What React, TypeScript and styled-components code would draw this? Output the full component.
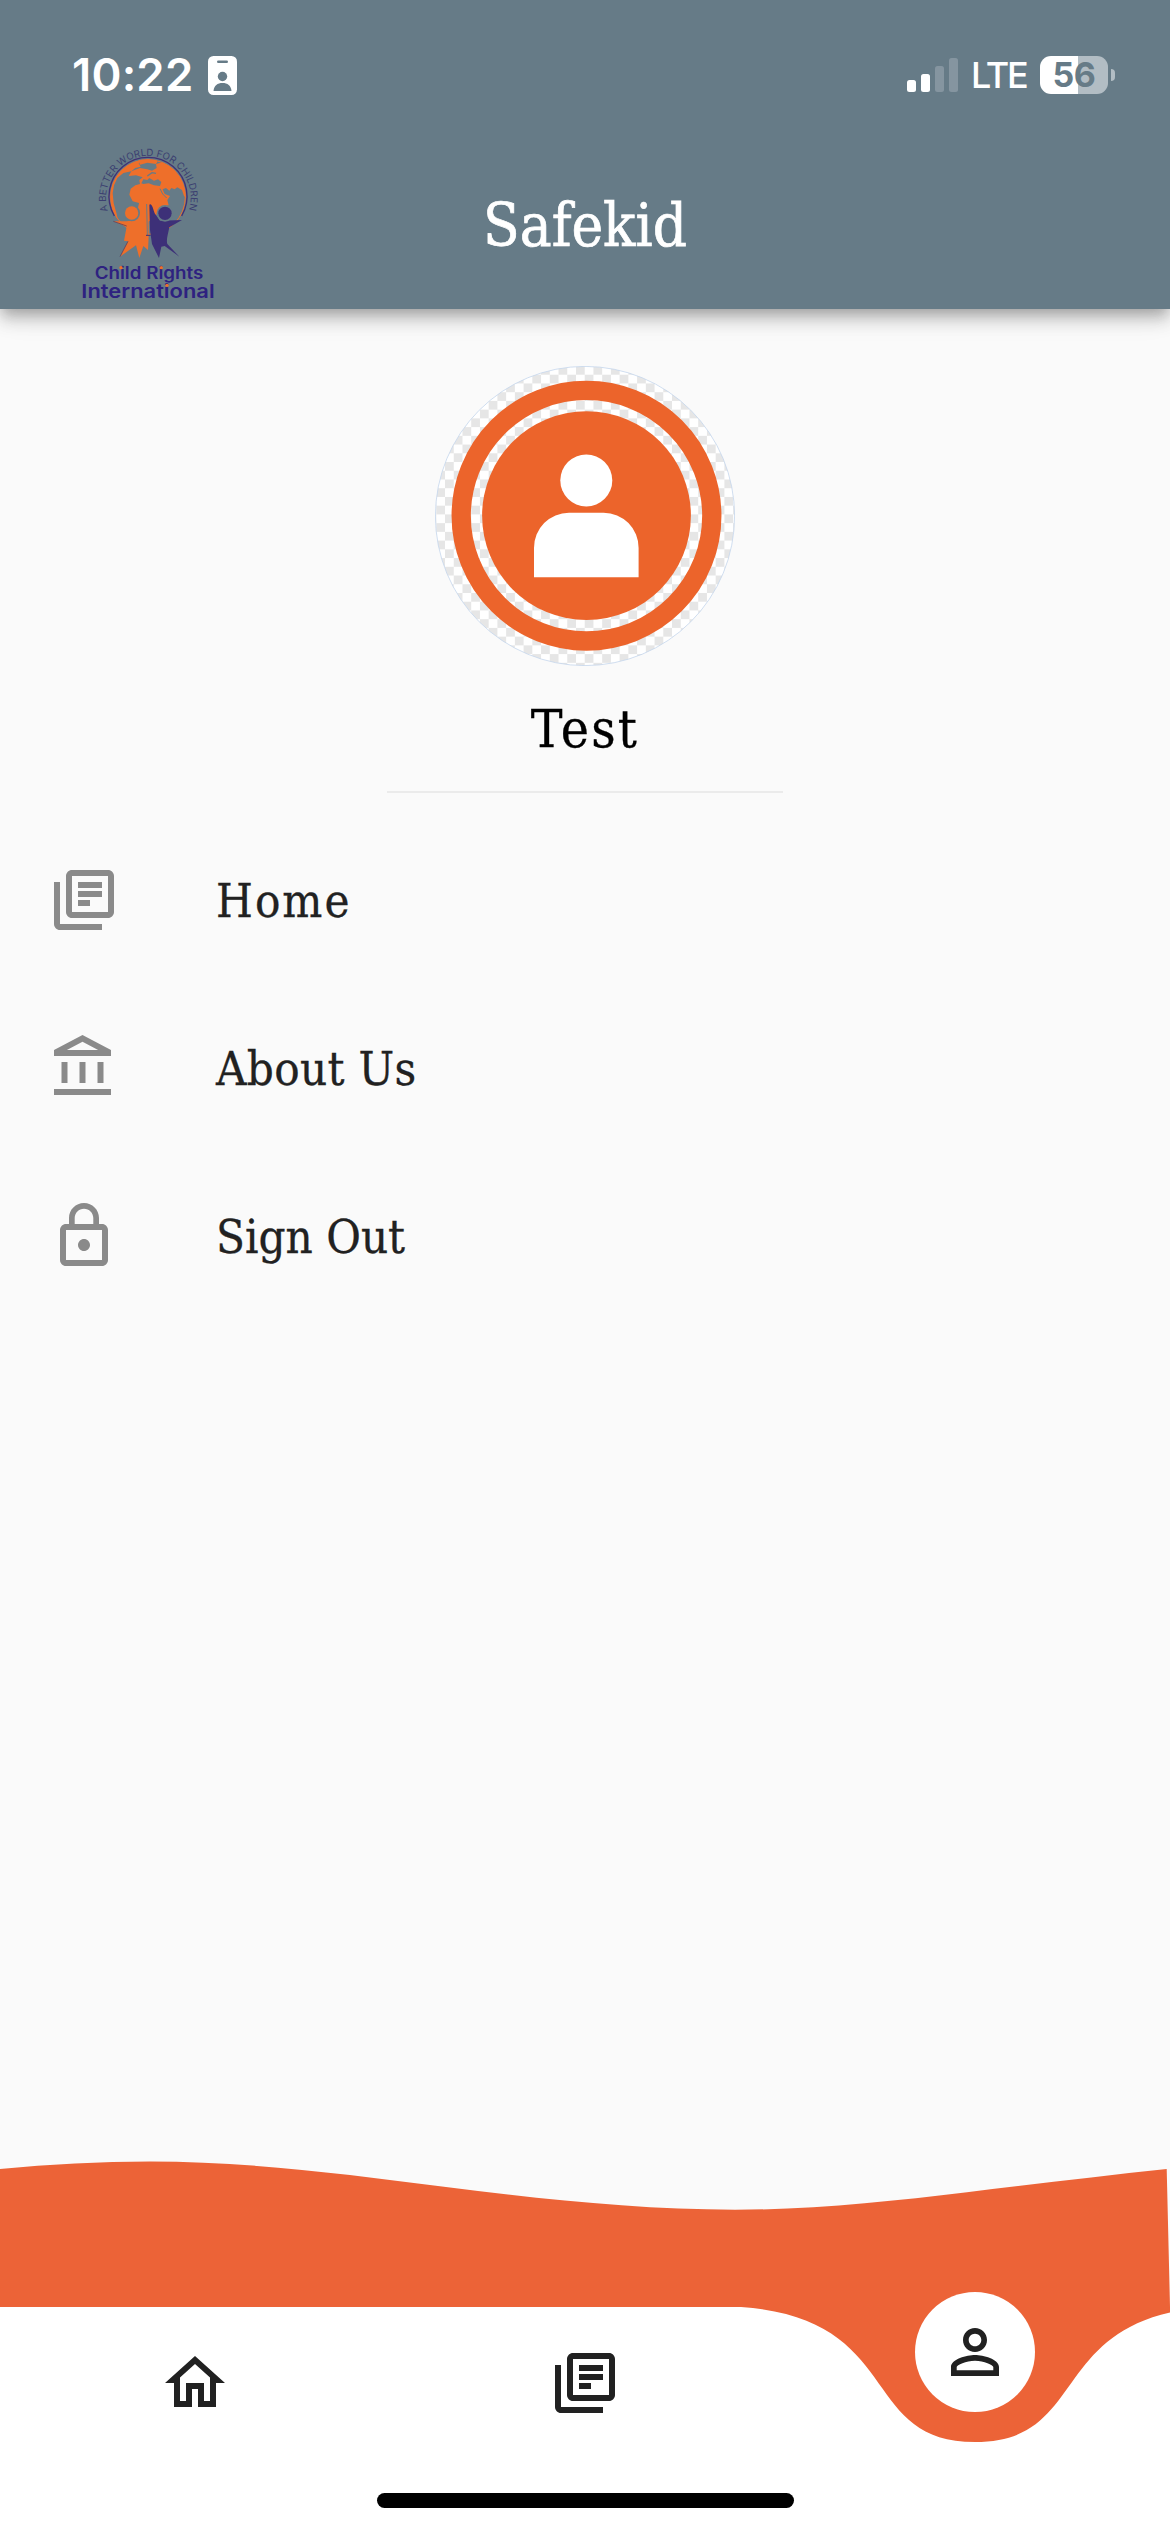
import React from "react";
import styled, { createGlobalStyle, css } from "styled-components";

const slate = "#667b87";
const orange = "#ec6337";
const avatarOrange = "#ec642b";
const ink = "#212121";
const serif = `"DejaVu Serif Condensed", "DejaVu Serif", "Liberation Serif", serif`;
const sans = `Inter, "Liberation Sans", sans-serif`;

const GlobalStyle = createGlobalStyle`
  * { box-sizing: border-box; }
  html, body { margin: 0; padding: 0; background: #fafafa; }
  svg { display: block; flex: none; }
`;

const Screen = styled.div`
  display: flex;
  flex-direction: column;
  width: 1170px;
  height: 2532px;
  overflow: hidden;
  background: #fafafa;
`;

const Header = styled.header`
  display: flex;
  flex-direction: column;
  flex: none;
  height: 309px;
  background: ${slate};
  box-shadow: 0 6px 12px -3px rgba(0, 0, 0, 0.2), 0 12px 15px rgba(0, 0, 0, 0.14),
    0 3px 30px rgba(0, 0, 0, 0.12);
`;

const StatusBar = styled.div`
  display: flex;
  justify-content: space-between;
  height: 140px;
  padding: 50px 55px 40px 72px;
  color: #fff;
  font-family: ${sans};
`;

const StatusGroup = styled.div<{ $gap: number }>`
  display: flex;
  align-items: center;
  gap: ${(p) => p.$gap}px;
  height: 50px;
`;

const Clock = styled.span`
  font-size: 45.5px;
  font-weight: 600;
  line-height: 50px;
  letter-spacing: 0.2px;
`;

const Network = styled.span`
  width: 68px;
  padding-left: 13px;
  font-size: 36px;
  font-weight: 450;
  line-height: 52px;
  letter-spacing: -2.2px;
  white-space: nowrap;
`;

const BatteryWrap = styled.div`
  display: flex;
  align-items: center;
  gap: 3px;
  margin-left: 14px;
`;

const Battery = styled.div`
  display: flex;
  align-items: center;
  justify-content: center;
  width: 68px;
  height: 38px;
  border-radius: 11px;
  background: linear-gradient(90deg, #fff 56%, #b2bdc4 56%);
  color: ${slate};
  font-size: 34px;
  font-weight: 700;
  line-height: 38px;
  letter-spacing: -0.5px;
`;

const BatteryTip = styled.span`
  width: 4px;
  height: 12px;
  border-radius: 0 6px 6px 0;
  background: #b2bdc4;
`;

const Toolbar = styled.div`
  display: grid;
  grid-template-columns: 300px 1fr 300px;
  height: 169px;
`;

const LogoSlot = styled.div`
  padding-left: 60px;
`;

const Title = styled.h1`
  margin: 0;
  padding-top: 51px;
  color: #fff;
  font-family: ${serif};
  font-size: 59.5px;
  font-weight: 400;
  line-height: 70px;
  text-align: center;
  -webkit-text-stroke: 0.7px #fff;
`;

const Profile = styled.section`
  display: flex;
  flex-direction: column;
  align-items: center;
  height: 507px;
  padding-top: 57px;
`;

const UserName = styled.h2`
  width: 396px;
  height: 127px;
  margin: 0;
  padding-top: 33px;
  border-bottom: 2px solid #ebebeb;
  color: #000;
  font-family: ${serif};
  font-size: 53px;
  font-weight: 400;
  line-height: 60px;
  letter-spacing: 2.2px;
  text-align: center;
  -webkit-text-stroke: 0.3px #000;
`;

const Menu = styled.nav`
  display: flex;
  flex-direction: column;
  flex: 1;
`;

const MenuRow = styled.a`
  display: flex;
  align-items: center;
  gap: 96px;
  height: 168px;
  padding-left: 48px;
  color: ${ink};
`;

const MenuLabel = styled.span<{ $spacing: number }>`
  padding-top: 2px;
  font-family: ${serif};
  font-size: 47px;
  line-height: 60px;
  letter-spacing: ${(p) => p.$spacing}px;
  -webkit-text-stroke: 0.3px ${ink};
`;

const Footer = styled.footer`
  flex: none;
  height: 372px;
`;

const TabBar = styled.div`
  position: relative;
  display: flex;
  flex-direction: column;
  align-items: center;
  height: 225px;
  background: ${orange};
`;

const TabCurve = styled.svg`
  position: absolute;
  inset: 0;
`;

const Tabs = styled.div`
  position: relative;
  display: grid;
  grid-template-columns: repeat(3, 1fr);
  justify-items: center;
  width: 100%;
  height: 186px;
`;

const Tab = styled.button<{ $active?: boolean }>`
  display: flex;
  align-items: center;
  justify-content: center;
  width: 120px;
  height: 120px;
  margin: 16px 0 0;
  padding: 0;
  border: 0;
  border-radius: 50%;
  background: transparent;
  ${(p) =>
    p.$active &&
    css`
      margin-top: -15px;
      background: #fff;
    `}
`;

const HomeIndicator = styled.div`
  position: relative;
  width: 417px;
  height: 15px;
  border-radius: 8px;
  background: #000;
`;

const paths = {
  library:
    "M20 2H8c-1.1 0-2 .9-2 2v12c0 1.1.9 2 2 2h12c1.1 0 2-.9 2-2V4c0-1.1-.9-2-2-2zm0 14H8V4h12v12zM4 6H2v14c0 1.1.9 2 2 2h14v-2H4V6zM10 9h8v2h-8zm0 3h4v2h-4zm0-6h8v2h-8z",
  bank:
    "M6.5 10h-2v7h2v-7zm6 0h-2v7h2v-7zm8.5 9H2v2h19v-2zm-2.5-9h-2v7h2v-7zm-7-6.74L16.71 6H6.29l5.21-2.74m0-2.26L2 6v2h19V6l-9.5-5z",
  lock:
    "M12 17c1.1 0 2-.9 2-2s-.9-2-2-2-2 .9-2 2 .9 2 2 2zm6-9h-1V6c0-2.76-2.24-5-5-5S7 3.24 7 6v2H6c-1.1 0-2 .9-2 2v10c0 1.1.9 2 2 2h12c1.1 0 2-.9 2-2V10c0-1.1-.9-2-2-2zM8.9 6c0-1.71 1.39-3.1 3.1-3.1s3.1 1.39 3.1 3.1v2H8.9V6zM18 20H6V10h12v10z",
  home:
    "M12 5.69l5 4.5V18h-2v-6H9v6H7v-7.81l5-4.5M12 3L2 12h3v8h6v-6h2v6h6v-8h3L12 3z",
  person:
    "M12 5.9c1.16 0 2.1.94 2.1 2.1s-.94 2.1-2.1 2.1S9.9 9.16 9.9 8s.94-2.1 2.1-2.1m0 9c2.97 0 6.1 1.46 6.1 2.1v1.1H5.9V17c0-.64 3.13-2.1 6.1-2.1M12 4C9.79 4 8 5.79 8 8s1.79 4 4 4 4-1.79 4-4-1.79-4-4-4zm0 9c-2.67 0-8 1.34-8 4v3h16v-3c0-2.66-5.33-4-8-4z",
};

type IconName = keyof typeof paths;

const Icon = ({ name, color }: { name: IconName; color: string }) => (
  <svg width="72" height="72" viewBox="0 0 24 24" fill={color}>
    <path d={paths[name]} />
  </svg>
);

const BadgeIcon = () => (
  <svg width="29" height="39" viewBox="0 0 29 39">
    <rect width="29" height="39" rx="5.5" fill="#fff" />
    <rect x="9" y="4.5" width="11" height="2.6" rx="1.3" fill={slate} />
    <circle cx="14.5" cy="20.5" r="4.7" fill={slate} />
    <path d="M5.5 35C6 29.5 9.5 27 14.5 27S23 29.500 23.500 35Z" fill={slate} />
  </svg>
);

const SignalIcon = () => (
  <svg width="51" height="34" viewBox="0 0 51 34">
    <rect x="0" y="22" width="9" height="12" rx="2.500" fill="#fff" />
    <rect x="14" y="16" width="9" height="18" rx="2.500" fill="#fff" />
    <rect x="28" y="8" width="9" height="26" rx="2.500" fill="#8595a0" />
    <rect x="42" y="0" width="9" height="34" rx="2.500" fill="#8595a0" />
  </svg>
);

const Logo = () => (
  <svg width="180" height="169" viewBox="0 0 540 507">
    <defs>
      <path id="motto" d="M144 213A127 127 0 1 1 386 213" />
      <clipPath id="globe">
        <circle cx="264" cy="171" r="113" />
      </clipPath>
    </defs>
    <g clipPath="url(#globe)" fill="#ee6f2a">
      <path d="M140 250V50H262L236 70 242 80 226 84 214 94 190 99 172 114 162 136 158 160 161 190 170 222 176 250Z" />
      <path d="M232 50H285L292 66 288 72 262 68 240 74Z" />
      <path d="M206 108 214 94 240 84 262 88 276 92 290 84 288 72 310 66 345 84 385 130V180L372 168 366 150 352 142 344 148 334 144 328 152 318 144 308 148 314 162 330 168 322 180 326 196 306 204 276 240 262 246 242 216 240 190 218 184 208 164 212 146 226 136 240 132 238 120 248 112 228 106Z" />
    </g>
    <path
      d="M244 130 250 118 262 120 268 114 282 122 294 118 304 126 300 138 282 136 266 130 250 132Z"
      fill={slate}
    />
    <path d="M300 146 308 162 320 174" stroke={slate} strokeWidth="3" fill="none" />
    <path d="M262 108 276 98 288 100" stroke={slate} strokeWidth="4" fill="none" />
    <circle cx="264" cy="171" r="112" fill="none" stroke="#ee6f2a" strokeWidth="3" />
    <path d="M163 228A117 117 0 1 1 365 228" fill="none" stroke="#403075" strokeWidth="4" />
    <path
      d="M226 240 237 190C240 168 248 168 250 190H258L266 215V290L264 330 250 318 238 354 228 316 180 350 204 304 192 302 200 260 160 244 200 244Z"
      fill="#ee6f2a"
    />
    <path d="M260 192 262 285" stroke={slate} strokeWidth="3" />
    <path d="M258 286H272" stroke="#403075" strokeWidth="3" />
    <path
      d="M268 194C274 188 278 200 284 220L300 242 366 240 328 262C324 284 318 300 322 312L358 350 314 318 304 320 297 354 276 312 270 270Z"
      fill="#3d3078"
    />
    <path d="M160 244 200 258M204 304 180 350" stroke="#4b3560" strokeWidth="2" fill="none" />
    <circle cx="215" cy="219" r="25" fill={slate} />
    <circle cx="215" cy="219" r="20" fill="#ee6f2a" />
    <circle cx="315" cy="220" r="25" fill={slate} />
    <circle cx="315" cy="220" r="20" fill="#3d3078" />
    <text fontFamily={sans} fontSize="29" fill="#3b3f70">
      <textPath href="#motto" textLength="474" lengthAdjust="spacing">
        A BETTER WORLD FOR CHILDREN
      </textPath>
    </text>
    <g fontFamily={sans} fontWeight="600" fill="#2e2280">
      <text x="104" y="416" fontSize="50" textLength="326" lengthAdjust="spacingAndGlyphs">
        Child Rights
      </text>
      <text x="64" y="474" fontSize="57" textLength="400" lengthAdjust="spacingAndGlyphs">
        International
      </text>
    </g>
    <g fill="#ee6f2a">
      <circle cx="183" cy="383" r="5" />
      <circle cx="304" cy="383" r="5" />
      <circle cx="321" cy="436" r="5" />
    </g>
  </svg>
);

const Avatar = () => (
  <svg width="300" height="300" viewBox="0 0 300 300">
    <defs>
      <pattern id="checker" x="1.3" y="0" width="17.46" height="17.46" patternUnits="userSpaceOnUse">
        <rect width="17.46" height="17.46" fill="#fff" />
        <rect width="8.73" height="8.73" fill="#e6e6e6" />
        <rect x="8.73" y="8.73" width="8.73" height="8.73" fill="#e6e6e6" />
      </pattern>
    </defs>
    <circle cx="150" cy="150" r="149.600" fill="url(#checker)" stroke="#c4d5ec" strokeWidth="0.8" />
    <circle cx="151.500" cy="149.700" r="125.300" fill="none" stroke={avatarOrange} strokeWidth="19.300" />
    <circle cx="151.500" cy="149.600" r="104.400" fill={avatarOrange} />
    <circle cx="151.300" cy="114.400" r="26" fill="#fff" />
    <path d="M99 211.300V182A35 35 0 0 1 134 146.700H168.600A35 35 0 0 1 203.600 182V211.300Z" fill="#fff" />
  </svg>
);

const menuItems: { icon: IconName; label: string; spacing: number }[] = [
  { icon: "library", label: "Home", spacing: 2 },
  { icon: "bank", label: "About Us", spacing: 0.3 },
  { icon: "lock", label: "Sign Out", spacing: 0 },
];

export default function App() {
  return (
    <>
      <GlobalStyle />
      <Screen>
        <Header>
          <StatusBar>
            <StatusGroup $gap={15}>
              <Clock>10:22</Clock>
              <BadgeIcon />
            </StatusGroup>
            <StatusGroup $gap={0}>
              <SignalIcon />
              <Network>LTE</Network>
              <BatteryWrap>
                <Battery>56</Battery>
                <BatteryTip />
              </BatteryWrap>
            </StatusGroup>
          </StatusBar>
          <Toolbar>
            <LogoSlot>
              <Logo />
            </LogoSlot>
            <Title>Safekid</Title>
          </Toolbar>
        </Header>
        <Profile>
          <Avatar />
          <UserName>Test</UserName>
        </Profile>
        <Menu>
          {menuItems.map((item) => (
            <MenuRow key={item.label}>
              <Icon name={item.icon} color="#8a8a8a" />
              <MenuLabel $spacing={item.spacing}>{item.label}</MenuLabel>
            </MenuRow>
          ))}
        </Menu>
        <Footer>
          <svg width="1170" height="147" viewBox="0 2160 1170 147">
            <path
              d="M0 2169C50 2164 100 2161.500 150 2161.500C249 2161.500 347 2174.300 446 2187C542 2199.300 639 2209.700 735 2209.700C812 2209.700 890 2201.600 967 2192.300C1033 2184.300 1100 2176 1166.700 2169L1170 2307H0Z"
              fill={orange}
            />
          </svg>
          <TabBar>
            <TabCurve width="1170" height="225" viewBox="0 0 1170 225">
              <path
                d="M0 0H741C904.800 11.250 858 135 975 135C1092 135 1045.200 11.250 1209 0V225H0Z"
                fill="#fff"
              />
            </TabCurve>
            <Tabs>
              <Tab aria-label="Home">
                <Icon name="home" color={ink} />
              </Tab>
              <Tab aria-label="Library">
                <Icon name="library" color={ink} />
              </Tab>
              <Tab aria-label="Profile" $active>
                <Icon name="person" color={ink} />
              </Tab>
            </Tabs>
            <HomeIndicator />
          </TabBar>
        </Footer>
      </Screen>
    </>
  );
}
